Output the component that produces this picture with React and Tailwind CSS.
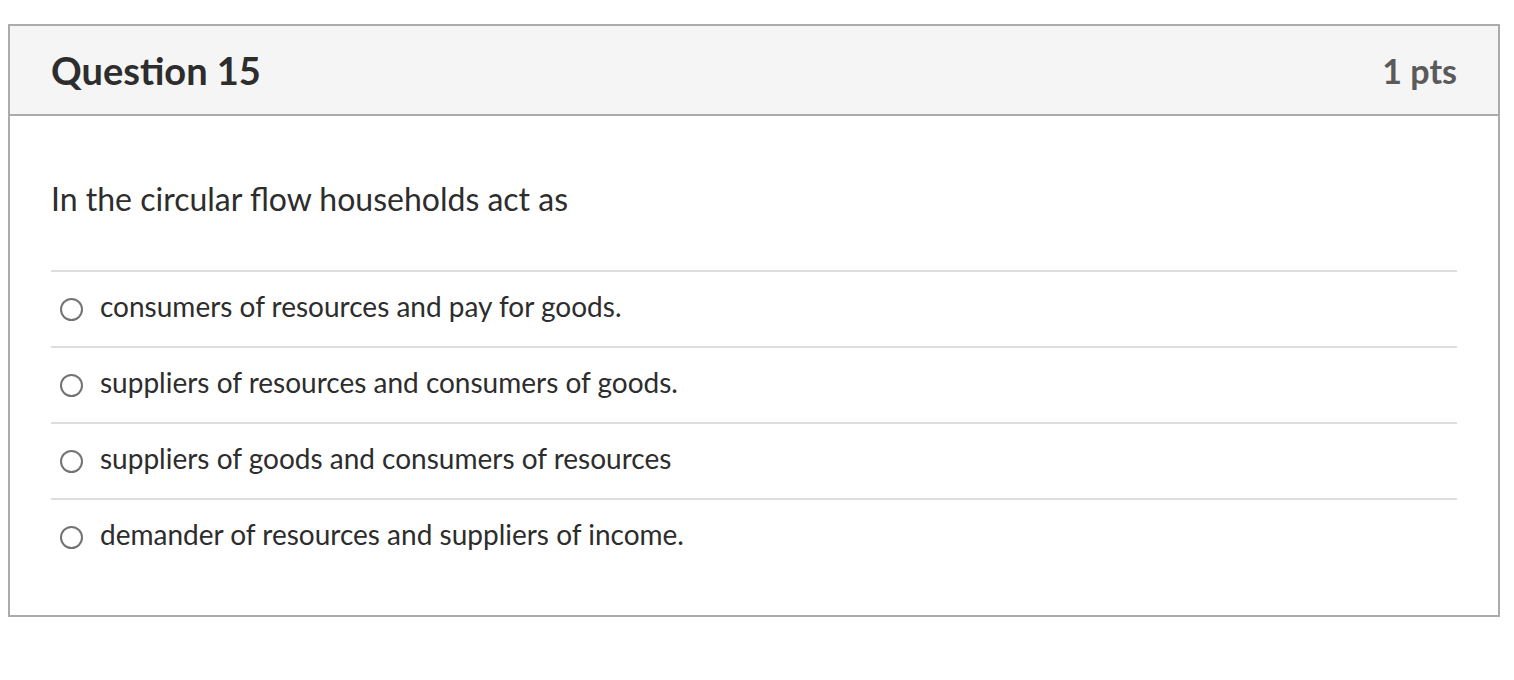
import React from 'react';

const options = [
  'consumers of resources and pay for goods.',
  'suppliers of resources and consumers of goods.',
  'suppliers of goods and consumers of resources',
  'demander of resources and suppliers of income.',
];

const App = () => {
  return (
    <div className="w-[1514px] h-[680px] bg-white pt-[24px] pl-[8px]" style={{ fontFamily: 'Lato, "Noto Sans", sans-serif' }}>
      <div className="w-[1492px] border-2 border-[#ababab]">
        {/* Header */}
        <div className="h-[90px] flex items-center justify-between px-[41px] bg-[#f5f5f5] border-b-2 border-[#ababab]">
          <h2 className="text-[38px] font-bold text-[#2d2d2d] leading-none">Question 15</h2>
          <span className="text-[34px] font-bold text-[#5a5a5a] leading-none mt-[2px]">1 pts</span>
        </div>

        {/* Body */}
        <div className="px-[41px] pb-[41px]">
          <p className="pt-[62px] pb-[50px] text-[32px] leading-[42px] text-[#2d2d2d]">
            In the circular flow households act as
          </p>
          <div>
            {options.map((opt, i) => (
              <label key={i} className="flex items-center h-[76px] border-t-2 border-[#dddddd]">
                <span className="ml-[9px] w-[23px] h-[23px] rounded-full border-2 border-[#737373] bg-white shrink-0" />
                <span className="ml-[17px] mb-[6px] text-[28px] leading-[36px] text-[#2d2d2d]">{opt}</span>
              </label>
            ))}
          </div>
        </div>
      </div>
    </div>
  );
};

export default App;
